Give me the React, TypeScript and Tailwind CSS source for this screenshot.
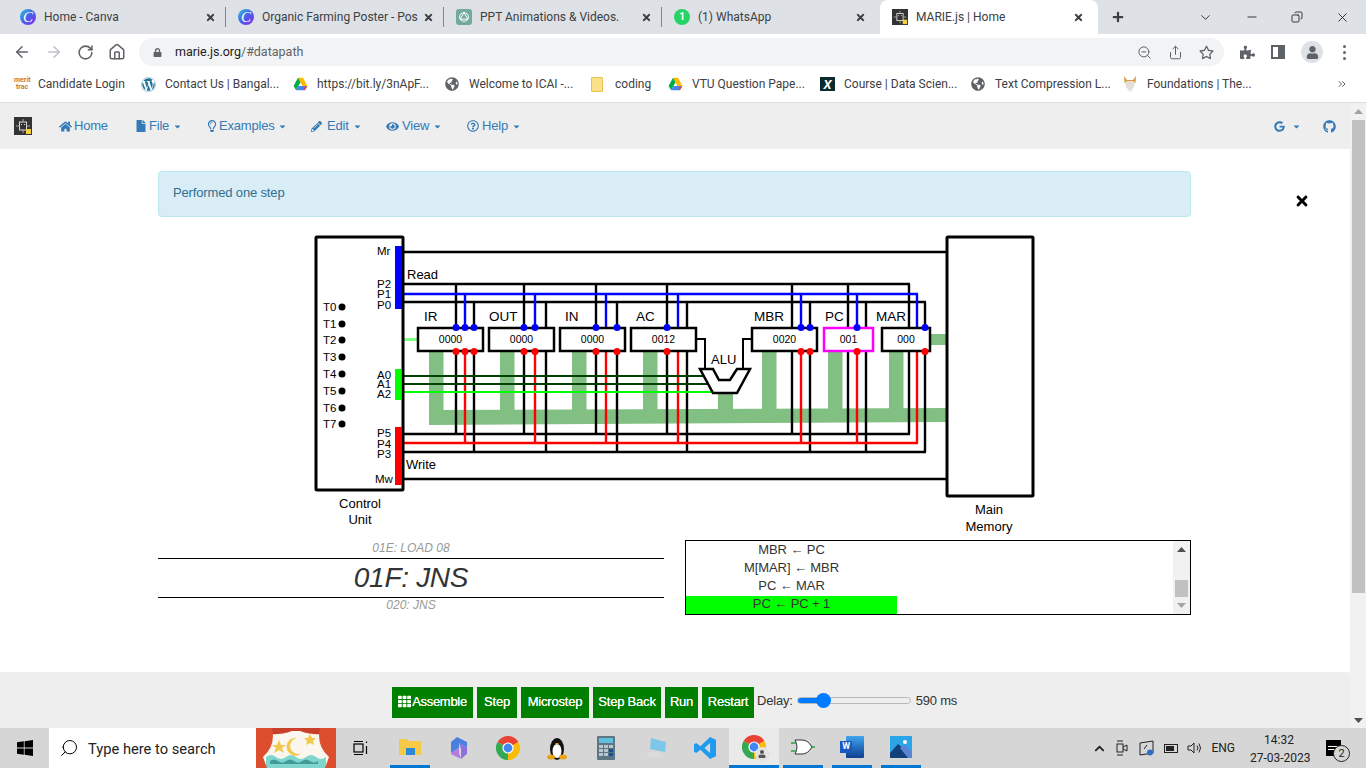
import {
  FaHome,
  FaFile,
  FaRegLightbulb,
  FaPencilAlt,
  FaEye,
  FaRegQuestionCircle,
  FaGoogle,
  FaGithub,
  FaCaretDown,
  FaTh,
  FaWordpress,
  FaGlobeAmericas,
  FaPuzzlePiece,
  FaRegStar,
  FaUser,
  FaLock,
  FaTimes,
  FaPlus,
  FaChevronUp,
} from "react-icons/fa";
import {
  ArrowLeft,
  ArrowRight,
  RotateCw,
  Home as HomeIcon,
  ZoomOut,
  Share,
  Minus,
  ChevronDown,
  ChevronsRight,
  X,
  Search,
  Copy,
} from "lucide-react";

const SANS = "font-['Liberation_Sans',Arial,sans-serif]";
const UI = "font-['Roboto','Open_Sans',sans-serif]";

function ChromeIcon({ size = 24 }: { size?: number }) {
  return (
    <svg width={size} height={size} viewBox="0 0 24 24">
      <path d="M12 12 1.6 6A12 12 0 0 1 22.4 6Z" fill="#ea4335" />
      <path d="M12 12 22.4 6A12 12 0 0 1 12 24Z" fill="#fbbc04" />
      <path d="M12 12 12 24A12 12 0 0 1 1.6 6Z" fill="#34a853" />
      <circle cx="12" cy="12" r="5.6" fill="#fff" />
      <circle cx="12" cy="12" r="4.4" fill="#4285f4" />
    </svg>
  );
}

function DriveIcon() {
  return (
    <svg width="15" height="14" viewBox="0 0 24 22">
      <polygon points="8,1 16,1 23,14 15,14" fill="#ffba00" />
      <polygon points="8,1 12,8 5,21 1,14" fill="#00ac47" />
      <polygon points="9,14 23,14 19,21 5,21" fill="#4285f4" />
      <polygon points="23,14 19,21 16,17" fill="#ea4335" />
    </svg>
  );
}

function CanvaIcon() {
  return (
    <div className="flex h-4 w-4 items-center justify-center rounded-full bg-gradient-to-br from-[#19c3d6] via-[#4a5bea] to-[#7d2ae8]">
      <span className="font-['Liberation_Serif',serif] text-[15px] italic leading-none text-white">
        C
      </span>
    </div>
  );
}

function GptIcon() {
  return (
    <div className="flex h-4 w-4 items-center justify-center rounded-[3px] bg-[#74aa9c]">
      <svg width="12" height="12" viewBox="0 0 12 12" fill="none" stroke="#fff" strokeWidth="1">
        <circle cx="6" cy="6" r="4.4" />
        <path d="M6 1.6 9.8 8.2H2.2Z" />
      </svg>
    </div>
  );
}

function WhatsIcon() {
  return (
    <div className="flex h-4 w-4 items-center justify-center rounded-full bg-[#25d366]">
      <span className="text-[10px] font-bold leading-none text-white">1</span>
    </div>
  );
}

function MarieIcon({ size = 18 }: { size?: number }) {
  return (
    <svg width={size} height={size} viewBox="0 0 18 18">
      <rect width="18" height="18" fill="#333" />
      <rect x="5.5" y="5" width="7" height="8" fill="none" stroke="#ddd" strokeWidth="1" />
      <path d="M9 2v3M9 13v3M2 9h3.5M12.5 9H16" stroke="#aaa" strokeWidth="1" />
      <rect x="7" y="7" width="1" height="1" fill="#ddd" />
      <rect x="10" y="7" width="1" height="1" fill="#ddd" />
      <rect x="12" y="12" width="5" height="5" fill="#f4d03f" />
    </svg>
  );
}

function Tab({
  icon,
  title,
  active,
  divider,
}: {
  icon: React.ReactNode;
  title: string;
  active?: boolean;
  divider?: boolean;
}) {
  return (
    <div
      className={
        active
          ? "flex h-[34px] w-[218px] items-center rounded-t-lg bg-white pl-[12px] pr-[14px]"
          : "flex h-[34px] w-[218px] items-center pl-[12px] pr-[14px]"
      }
    >
      <div className="flex w-[24px] shrink-0 items-center">{icon}</div>
      <span className="flex-1 overflow-hidden whitespace-nowrap text-[12px] text-[#3c4043]">{title}</span>
      <FaTimes className="ml-1 shrink-0 text-[#3c4043]" size={11} />
      {divider && <div className="ml-[9px] mr-[-14px] h-[20px] w-px shrink-0 bg-[#80868b]" />}
    </div>
  );
}

const bookmarks = [
  { w: "w-[127px]", label: "Candidate Login", icon: <span className="block w-4 text-center text-[7px] font-bold leading-[7px] text-[#c9783a]">merit trac</span> },
  { w: "w-[152px]", label: "Contact Us | Bangal...", icon: <FaWordpress size={15} className="text-[#21759b]" /> },
  { w: "w-[152px]", label: "https://bit.ly/3nApF...", icon: <DriveIcon /> },
  { w: "w-[146px]", label: "Welcome to ICAI -...", icon: <FaGlobeAmericas size={14} className="text-[#5f6368]" /> },
  { w: "w-[77px]", label: "coding", icon: <div className="h-[15px] w-[12px] rounded-[1px] border border-[#e8c14f] bg-[#fbe08a]" /> },
  { w: "w-[152px]", label: "VTU Question Pape...", icon: <DriveIcon /> },
  { w: "w-[151px]", label: "Course | Data Scien...", icon: <span className="flex h-[14px] w-[15px] items-center justify-center bg-[#0b2b2e] text-[13px] font-bold italic leading-none text-white">X</span> },
  { w: "w-[152px]", label: "Text Compression L...", icon: <FaGlobeAmericas size={14} className="text-[#5f6368]" /> },
  {
    w: "w-[150px]",
    label: "Foundations | The...",
    icon: (
      <svg width="14" height="16" viewBox="0 0 14 16">
        <path d="M2 5H12L11 11 7 16 3 11Z" fill="#e4e0d8" />
        <path d="M1 0 4 4H10L13 0 12.5 7 10 5H4L1.5 7Z" fill="#dc9a3e" />
      </svg>
    ),
  },
];

function ChromeBars() {
  return (
    <div className={UI}>
      <div className="flex h-[34px] items-center bg-[#dee1e6] pl-[8px]">
        <Tab icon={<CanvaIcon />} title="Home - Canva" divider />
        <Tab icon={<CanvaIcon />} title="Organic Farming Poster - Pos" divider />
        <Tab icon={<GptIcon />} title="PPT Animations & Videos." divider />
        <Tab icon={<WhatsIcon />} title="(1) WhatsApp" />
        <Tab icon={<MarieIcon size={16} />} title="MARIE.js | Home" active />
        <FaPlus size={12} className="ml-[14px] text-[#3c4043]" />
        <div className="ml-[74px] flex items-center gap-[32px] text-[#202124]">
          <ChevronDown size={15} strokeWidth={1.4} />
          <Minus size={14} strokeWidth={1.5} />
          <Copy size={12} strokeWidth={1.7} className="-scale-x-100" />
          <X size={15} strokeWidth={1.4} />
        </div>
      </div>
      <div className="flex h-[36px] items-center bg-white">
        <div className="flex items-center gap-[14px] pl-[13px] text-[#5f6368]">
          <ArrowLeft size={18} strokeWidth={2} />
          <ArrowRight size={18} strokeWidth={2} className="text-[#bdc1c6]" />
          <RotateCw size={17} strokeWidth={2.2} />
          <HomeIcon size={18} strokeWidth={2} />
        </div>
        <div className="ml-[13px] flex h-[28px] w-[1085px] items-center rounded-full bg-[#f1f3f4] pl-[14px] pr-[10px]">
          <FaLock size={9} className="text-[#5f6368]" />
          <span className="ml-[13px] flex-1 text-[12.5px] text-[#202124]">
            marie.js.org<span className="text-[#5f6368]">/#datapath</span>
          </span>
          <div className="flex items-center gap-[16px] text-[#5f6368]">
            <ZoomOut size={15} strokeWidth={1.6} />
            <Share size={15} strokeWidth={1.6} />
            <FaRegStar size={15} />
          </div>
        </div>
        <div className="ml-[16px] flex items-center gap-[16px] text-[#5f6368]">
          <FaPuzzlePiece size={15} />
          <div className="flex h-[14px] w-[14px] justify-end border-2 border-[#5f6368]">
            <div className="h-full w-[5px] bg-[#5f6368]" />
          </div>
          <div className="flex h-[22px] w-[22px] items-center justify-center overflow-hidden rounded-full bg-[#dee1e6]">
            <FaUser size={13} />
          </div>
          <div className="flex flex-col gap-[3px] pl-1">
            <div className="h-[3px] w-[3px] rounded-full bg-[#5f6368]" />
            <div className="h-[3px] w-[3px] rounded-full bg-[#5f6368]" />
            <div className="h-[3px] w-[3px] rounded-full bg-[#5f6368]" />
          </div>
        </div>
      </div>
      <div className="flex h-[33px] items-center border-b border-[#dadce0] bg-white pb-[4px] pl-[14px]">
        {bookmarks.map((b) => (
          <div key={b.label} className={`flex ${b.w} items-center`}>
            <div className="flex w-[24px] shrink-0 items-center">{b.icon}</div>
            <span className="whitespace-nowrap text-[12px] text-[#3c4043]">{b.label}</span>
          </div>
        ))}
        <ChevronsRight size={12} className="ml-[63px] text-[#5f6368]" />
      </div>
    </div>
  );
}

function NavItem({
  icon,
  label,
  width,
  slot,
  caret = true,
}: {
  icon: React.ReactNode;
  label: string;
  width: string;
  slot: string;
  caret?: boolean;
}) {
  return (
    <div className={`flex ${width} items-center text-[#337ab7]`}>
      <div className={`flex ${slot} shrink-0 items-center`}>{icon}</div>
      <span className="text-[13px] tracking-[-0.2px]">{label}</span>
      {caret && <FaCaretDown size={9} className="ml-[4px] text-[#337ab7]" />}
    </div>
  );
}

function Navbar() {
  return (
    <div className={`flex h-[46px] items-center bg-[#eeeeee] pl-[14px] pr-[14px] ${SANS}`}>
      <MarieIcon />
      <div className="ml-[27px] flex">
        <NavItem width="w-[76px]" slot="w-[15px]" icon={<FaHome size={13} />} label="Home" caret={false} />
        <NavItem width="w-[71px]" slot="w-[14px]" icon={<FaFile size={12} />} label="File" />
        <NavItem width="w-[105px]" slot="w-[13px]" icon={<FaRegLightbulb size={12} />} label="Examples" />
        <NavItem width="w-[75px]" slot="w-[16px]" icon={<FaPencilAlt size={11} />} label="Edit" />
        <NavItem width="w-[81px]" slot="w-[16px]" icon={<FaEye size={13} />} label="View" />
        <NavItem width="w-[60px]" slot="w-[15px]" icon={<FaRegQuestionCircle size={12} />} label="Help" />
      </div>
      <div className="ml-auto flex items-center text-[#337ab7]">
        <FaGoogle size={11} />
        <FaCaretDown size={9} className="ml-[7px]" />
        <FaGithub size={13} className="ml-[22px]" />
      </div>
    </div>
  );
}

type Reg = {
  name: string;
  value: string;
  x: number;
  w: number;
  labelX: number;
  stroke?: string;
};

const regs: Reg[] = [
  { name: "IR", value: "0000", x: 418, w: 65, labelX: 424 },
  { name: "OUT", value: "0000", x: 489, w: 65, labelX: 489 },
  { name: "IN", value: "0000", x: 560, w: 65, labelX: 565 },
  { name: "AC", value: "0012", x: 631, w: 65, labelX: 636 },
  { name: "MBR", value: "0020", x: 752, w: 65, labelX: 754 },
  { name: "PC", value: "001", x: 824, w: 49, labelX: 825, stroke: "#ff00ff" },
  { name: "MAR", value: "000", x: 882, w: 48, labelX: 876 },
];

// [black read, blue/red, black write]
const wires = [
  [456, 465, 474],
  [524, 535, 546],
  [596, 606, 617],
  [667, 678, 687],
  [792, 801, 810],
  [848, 857, 866],
  [909, 917, 925],
];

const dots = [456, 465, 474, 524, 535, 596, 617, 667, 801, 810, 857, 925];
const busStubs = [429, 500, 572, 643, 762, 828, 889];
const timeY = [307, 324, 340, 357, 374, 391, 408, 424];

function Datapath() {
  return (
    <svg width="730" height="305" viewBox="310 230 730 305" className="block">
      {/* data bus */}
      <g fill="#82bf82">
        <polygon points="429,410 946,408 946,422 429,425" />
        {busStubs.map((x) => (
          <rect key={x} x={x} y={351} width={14.5} height={60} />
        ))}
        <rect x="718" y="393" width="15" height="17" />
        <rect x="930" y="334" width="16" height="11" />
      </g>
      <rect x="403" y="338" width="15" height="3" fill="#80ff80" />

      {/* memory read / write */}
      <path d="M403 252H946M403 479H946" stroke="#000" strokeWidth="2.4" fill="none" />

      {/* control lines */}
      <g fill="none" strokeWidth="2.4">
        <path d="M403 284H910M403 302H926M403 434H910M403 452H926" stroke="#000" />
        {wires.map(([a, , c]) => (
          <path key={a} d={`M${a} 284V434M${c} 302V452`} stroke="#000" />
        ))}
        <path d="M403 294H918" stroke="#0000ff" />
        <path d="M403 443H918" stroke="#ff0000" />
        {wires.map(([, b]) => (
          <g key={b}>
            <path d={`M${b} 294V328`} stroke="#0000ff" />
            <path d={`M${b} 351V443`} stroke="#ff0000" />
          </g>
        ))}
      </g>

      {/* ALU */}
      <path d="M696 339H705V369M752 339H743V369" fill="none" stroke="#000" strokeWidth="2" />
      <path d="M403 376H704M403 384H708" stroke="#004000" strokeWidth="2.2" />
      <path d="M403 392H713" stroke="#00ff00" strokeWidth="2.2" />
      <polygon
        points="700,369 713,369 719,380 730,380 737,369 750,369 737,393 713,393"
        fill="#fff"
        stroke="#000"
        strokeWidth="2.5"
      />
      <text x="711" y="364" fontSize="13">ALU</text>

      {/* registers */}
      {regs.map((r) => (
        <g key={r.name}>
          <rect x={r.x} y={328} width={r.w} height={23} fill="#fff" stroke={r.stroke ?? "#000"} strokeWidth="2.5" />
          <text x={r.x + r.w / 2} y={343} fontSize="10.5" textAnchor="middle">{r.value}</text>
          <text x={r.labelX} y={321} fontSize="13.5">{r.name}</text>
        </g>
      ))}
      {dots.map((x) => (
        <circle key={x} cx={x} cy={327.5} r={3.5} fill="#0000ff" />
      ))}
      {dots.map((x) => (
        <circle key={x} cx={x} cy={351.5} r={3.5} fill="#ff0000" />
      ))}

      {/* control unit */}
      <rect x="316" y="237" width="87" height="253" rx="1" fill="#fff" stroke="#000" strokeWidth="3" />
      <rect x="395" y="246" width="7" height="63" fill="#0000ff" />
      <rect x="395" y="369" width="6" height="31" fill="#00ff00" />
      <rect x="395" y="427" width="7" height="58" fill="#ff0000" />
      {timeY.map((y, i) => (
        <g key={y}>
          <text x="323" y={y + 4} fontSize="11.5">{`T${i}`}</text>
          <circle cx="342" cy={y} r="3.5" fill="#000" />
        </g>
      ))}
      <g fontSize="11.5">
        <text x="377" y="255">Mr</text>
        <text x="377" y="288">P2</text>
        <text x="377" y="298">P1</text>
        <text x="377" y="309">P0</text>
        <text x="377" y="379">A0</text>
        <text x="377" y="388">A1</text>
        <text x="377" y="398">A2</text>
        <text x="377" y="437">P5</text>
        <text x="377" y="448">P4</text>
        <text x="377" y="458">P3</text>
        <text x="375" y="483">Mw</text>
      </g>
      <text x="407" y="279" fontSize="13">Read</text>
      <text x="406" y="469" fontSize="13">Write</text>
      <text x="360" y="508" fontSize="13" textAnchor="middle">Control</text>
      <text x="360" y="524" fontSize="13" textAnchor="middle">Unit</text>

      {/* main memory */}
      <rect x="947" y="237" width="86" height="259" rx="1" fill="#fff" stroke="#000" strokeWidth="3" />
      <text x="989" y="514" fontSize="13" textAnchor="middle">Main</text>
      <text x="989" y="531" fontSize="13" textAnchor="middle">Memory</text>
    </svg>
  );
}

function Triangle({ up, color }: { up?: boolean; color: string }) {
  return (
    <svg width="9" height="5" viewBox="0 0 9 5" className="shrink-0">
      <polygon points={up ? "4.5,0 9,5 0,5" : "0,0 9,0 4.5,5"} fill={color} />
    </svg>
  );
}

function Instructions() {
  const rows = ["MBR ← PC", "M[MAR] ← MBR", "PC ← MAR"];
  return (
    <div className="ml-[158px] mt-[5px] flex gap-[21px]">
      <div className="w-[506px] text-center italic">
        <div className="h-[18px] pt-[1px] text-[12px] leading-[15px] text-[#999]">01E: LOAD 08</div>
        <div className="h-[40px] border-y border-black text-[28px] leading-[38px] tracking-[-0.3px] text-[#333]">01F: JNS</div>
        <div className="text-[12px] leading-[15px] text-[#999]">020: JNS</div>
      </div>
      <div className="flex h-[75px] w-[506px] overflow-hidden border border-black">
        <div className="w-[211px] text-center text-[13px] leading-[16px] tracking-[-0.1px] text-[#333]">
          <div className="h-[1px]" />
          {rows.map((r) => (
            <div key={r} className="h-[18px]">{r}</div>
          ))}
          <div className="h-[18px] bg-[#00ff00]">PC ← PC + 1</div>
        </div>
        <div className="ml-auto flex w-[17px] flex-col items-center bg-[#f1f1f1] py-[6px]">
          <Triangle up color="#505050" />
          <div className="mt-[28px] h-[17px] w-[13px] bg-[#c1c1c1]" />
          <div className="mt-auto">
            <Triangle color="#a3a3a3" />
          </div>
        </div>
      </div>
    </div>
  );
}

function BottomBar() {
  const buttons = [
    { label: "Step", w: "w-[40px]" },
    { label: "Microstep", w: "w-[68px]" },
    { label: "Step Back", w: "w-[68px]" },
    { label: "Run", w: "w-[33px]" },
    { label: "Restart", w: "w-[52px]" },
  ];
  return (
    <div className="flex h-[56px] items-center gap-[4px] rounded-tr-[3px] bg-[#eeeeee] pl-[392px] text-[13px]">
      <div className="mt-[5px] flex h-[31px] w-[81px] items-center justify-center gap-[1px] bg-[#008000] pb-[2px] tracking-[-0.3px] text-white [text-shadow:0_0_0.6px_#fff]">
        <FaTh size={13} />
        Assemble
      </div>
      {buttons.map((b) => (
        <div
          key={b.label}
          className={`mt-[5px] flex h-[31px] ${b.w} items-center justify-center bg-[#008000] pb-[2px] tracking-[-0.2px] text-white [text-shadow:0_0_0.6px_#fff]`}
        >
          {b.label}
        </div>
      ))}
      <span className="ml-[-1px] mt-[2px] tracking-[-0.2px] text-[#333]">Delay:</span>
      <div className="relative h-[7px] w-[114px] rounded-full border border-[#b7b7b7] bg-[#efefef]">
        <div className="h-full w-[26px] rounded-l-full bg-[#007bff]" />
        <div className="absolute left-[18px] top-[-5px] h-[15px] w-[15px] rounded-full bg-[#007bff]" />
      </div>
      <span className="ml-[1px] mt-[2px] tracking-[-0.2px] text-[#333]">590 ms</span>
    </div>
  );
}

function PageScrollbar() {
  return (
    <div className="flex w-[16px] shrink-0 flex-col items-center bg-[#f1f1f1] pb-[5px] pt-[6px]">
      <Triangle up color="#a3a3a3" />
      <div className="mt-[6px] h-[473px] w-[13px] bg-[#c1c1c1]" />
      <div className="mt-auto">
        <Triangle color="#505050" />
      </div>
    </div>
  );
}

function TaskIcon({ children, line, active }: { children: React.ReactNode; line?: boolean; active?: boolean }) {
  return (
    <div
      className={
        active
          ? "flex h-full w-[49.2px] flex-col items-center bg-[#eaeaea]"
          : "flex h-full w-[49.2px] flex-col items-center"
      }
    >
      <div className="flex flex-1 items-center justify-center">{children}</div>
      {line || active ? (
        <div className={active ? "h-[3px] w-full bg-[#0078d4]" : "h-[3px] w-[40px] bg-[#0078d4]"} />
      ) : null}
    </div>
  );
}

function Taskbar() {
  return (
    <div className={`flex h-[40px] items-center bg-[#d6d6d6] ${UI}`}>
      <div className="flex h-full w-[49px] items-center justify-center">
        <svg width="16" height="16" viewBox="0 0 16 16" fill="#000">
          <path d="M0 2.3 6.8 1.3V7.6H0ZM7.6 1.2 16 0V7.6H7.6ZM0 8.4H6.8V14.7L0 13.7ZM7.6 8.4H16V16L7.6 14.8Z" />
        </svg>
      </div>
      <div className="flex h-full w-[207px] items-center bg-white pl-[10px]">
        <Search size={20} strokeWidth={1.2} className="-scale-x-100 text-black" />
        <span className="ml-[9px] mt-[2px] text-[14.7px] text-[#222]">Type here to search</span>
      </div>
      <svg width="80" height="40" viewBox="0 0 80 40" className="shrink-0">
        <rect width="80" height="40" fill="#fbf7ee" />
        <path d="M10 29q5-4 10 0t10 0 10 0 10 0 10 0 10 0V40H10Z" fill="#7fd6cf" />
        <path d="M14 33q4-3 8 0t8 0 8 0 8 0 8 0 8 0V36H14Z" fill="#3f9c98" />
        <path d="M0 0H80V4Q60 9 44 3H36Q20 9 0 4Z" fill="#c8402a" />
        <path d="M0 0H16Q20 18 7 29L11 40H0Z" fill="#dd4e2e" />
        <path d="M80 0H64Q60 18 73 29L69 40H80Z" fill="#dd4e2e" />
        <path d="M42 10A9 9 0 1 0 46 25 8 8 0 1 1 42 10Z" fill="#f2c94c" />
        <polygon points="23,12 25,17 30,17 26,20 28,25 23,22 18,25 20,20 16,17 21,17" fill="#f2c94c" />
        <polygon points="54,6 56,10 60,10 57,13 58,17 54,15 50,17 51,13 48,10 52,10" fill="#f2c94c" />
      </svg>
      <div className="ml-[1px] flex h-full w-[48px] items-center justify-center">
        <svg width="16" height="16" viewBox="0 0 16 16" fill="none" stroke="#000" strokeWidth="1.2">
          <rect x="1" y="4" width="9" height="8" />
          <path d="M1 1.5H10M1 14.5H10M13.5 1.5V3M13.5 6V14" />
        </svg>
      </div>
      <TaskIcon line>
        <svg width="22" height="20" viewBox="0 0 22 20">
          <path d="M0 2H8L10 4H22V18H0Z" fill="#f7c948" />
          <rect x="7" y="11" width="9" height="7" fill="#2a8ad4" />
        </svg>
      </TaskIcon>
      <TaskIcon>
        <svg width="20" height="22" viewBox="0 0 20 22">
          <path d="M8 0 18 5V11L10 6V11L2 16V5Z" fill="#4b7fe0" />
          <path d="M2 16 10 11V16L12 22 2 17Z" fill="#b57be0" />
          <path d="M10 6 18 11V17L12 22V12Z" fill="#8f6fe0" />
        </svg>
      </TaskIcon>
      <TaskIcon>
        <ChromeIcon />
      </TaskIcon>
      <TaskIcon>
        <svg width="20" height="24" viewBox="0 0 20 24">
          <ellipse cx="10" cy="13" rx="7" ry="11" fill="#111" />
          <ellipse cx="10" cy="15" rx="4.5" ry="7" fill="#fff" />
          <ellipse cx="4" cy="21" rx="4" ry="2.5" fill="#e8a317" />
          <ellipse cx="16" cy="21" rx="4" ry="2.5" fill="#e8a317" />
          <path d="M8 7h4l-2 2Z" fill="#e8a317" />
        </svg>
      </TaskIcon>
      <TaskIcon>
        <svg width="18" height="24" viewBox="0 0 18 24">
          <rect width="18" height="24" rx="1" fill="#5e7583" />
          <rect x="2" y="2" width="14" height="5" fill="#5fc1dd" />
          {[9, 13, 17].map((y) =>
            [2, 7, 12].map((x) => (
              <rect key={`${x}-${y}`} x={x} y={y} width="4" height="3" fill={x === 12 && y > 9 ? "#16508e" : "#b9c6cd"} />
            )),
          )}
        </svg>
      </TaskIcon>
      <TaskIcon>
        <svg width="24" height="22" viewBox="0 0 24 22">
          <polygon points="7,1 22,5 21,15 6,12" fill="#7cc7ea" />
          <polygon points="2,16 15,15 20,20 6,21" fill="#dcdcdc" />
        </svg>
      </TaskIcon>
      <TaskIcon>
        <svg width="22" height="22" viewBox="0 0 24 24">
          <path d="M17.5 0 24 3v18l-6.5 3L7 14l-4.5 3.5L0 16V8l2.5-1.5L7 10ZM17.5 6.5 11.5 12l6 5.5Z" fill="#1f9cf0" />
        </svg>
      </TaskIcon>
      <TaskIcon active>
        <div className="relative">
          <ChromeIcon />
          <div className="absolute bottom-[-3px] right-[-4px] flex h-[15px] w-[15px] items-center justify-center rounded-full bg-[#e3e3e3]">
            <FaUser size={8} className="text-[#555]" />
          </div>
        </div>
      </TaskIcon>
      <TaskIcon line>
        <svg width="24" height="20" viewBox="0 0 24 20" fill="#fff" stroke="#333" strokeWidth="1">
          <path d="M4 3H11Q17 3 21 10 17 17 11 17H4Q8 10 4 3Z" />
          <path d="M0 6H5M0 14H5" stroke="#2e9e3f" strokeWidth="1.5" />
          <path d="M21 10H24" stroke="#2e9e3f" strokeWidth="1.5" />
        </svg>
      </TaskIcon>
      <TaskIcon line>
        <div className="relative h-[22px] w-[24px]">
          <div className="ml-[6px] h-full w-[18px] rounded-[1px] bg-gradient-to-b from-[#41a5ee] to-[#103f91]" />
          <div className="absolute left-0 top-[5px] flex h-[12px] w-[12px] items-center justify-center bg-[#185abd] text-[9px] font-bold text-white">
            W
          </div>
        </div>
      </TaskIcon>
      <TaskIcon line>
        <svg width="22" height="22" viewBox="0 0 22 22">
          <rect width="22" height="22" fill="#2aa5e8" />
          <circle cx="15" cy="6" r="2" fill="#fff" />
          <path d="M0 17 8 8 22 20V22H0Z" fill="#12407a" />
          <path d="M10 12 15 9 22 16V22H18Z" fill="#5b83d4" />
        </svg>
      </TaskIcon>
      <div className="ml-auto flex h-full items-center text-black">
        <FaChevronUp size={11} className="text-[#222]" />
        <svg width="14" height="16" viewBox="0 0 14 16" fill="none" stroke="#222" className="ml-[10px]">
          <rect x="2" y="4" width="6" height="8" />
          <path d="M8 7 12 5V11L8 9M2 1H8M2 15H8" />
        </svg>
        <svg width="16" height="16" viewBox="0 0 16 16" fill="none" stroke="#222" className="ml-[10px]">
          <path d="M1 3 14 1V13L1 15Z" />
          <circle cx="11" cy="12.5" r="3" fill="#2a6fc4" stroke="none" />
          <path d="M5 9 8 5" />
        </svg>
        <div className="ml-[9px] h-[9px] w-[14px] border border-[#222] p-[1px]">
          <div className="h-full w-[8px] bg-[#222]" />
        </div>
        <svg width="16" height="16" viewBox="0 0 16 16" fill="none" stroke="#222" className="ml-[9px]">
          <path d="M1 6H4L7 3V13L4 10H1ZM10 5.5Q12 8 10 10.5M12 3.5Q15 8 12 12.5" />
        </svg>
        <span className="ml-[8px] text-[12px] text-[#222]">ENG</span>
        <div className="ml-[15px] w-[58px] pt-[1px] text-center text-[12px] leading-[18px] text-[#222]">
          <div>14:32</div>
          <div className="whitespace-nowrap">27-03-2023</div>
        </div>
        <div className="relative ml-[18px] mr-[25px] flex h-[16px] w-[15px] flex-col justify-center gap-[2px] bg-black px-[2px]">
          <div className="h-px bg-white" />
          <div className="h-px bg-white" />
          <div className="absolute left-[7px] top-[5px] flex h-[17px] w-[17px] items-center justify-center rounded-full border border-[#222] bg-[#d6d6d6] text-[11px] leading-none text-[#222]">
            2
          </div>
        </div>
      </div>
    </div>
  );
}

export default function App() {
  return (
    <div className="flex h-[768px] w-[1366px] flex-col overflow-hidden bg-white">
      <ChromeBars />
      <div className="flex min-h-0 flex-1">
        <div className={`flex w-[1350px] shrink-0 flex-col ${SANS}`}>
          <Navbar />
          <div className="flex-1">
            <div className="ml-[158px] mt-[22px] flex">
              <div className="flex h-[46px] w-[1033px] items-center rounded border border-[#bce8f1] bg-[#d9edf7] pb-[2px] pl-[14px] text-[13px] tracking-[-0.15px] text-[#31708f]">
                Performed one step
              </div>
              <FaTimes size={16} className="ml-[103px] mt-[22px] text-black" />
            </div>
            <div className="ml-[310px] mt-[13px]">
              <Datapath />
            </div>
            <Instructions />
          </div>
          <BottomBar />
        </div>
        <PageScrollbar />
      </div>
      <Taskbar />
    </div>
  );
}
